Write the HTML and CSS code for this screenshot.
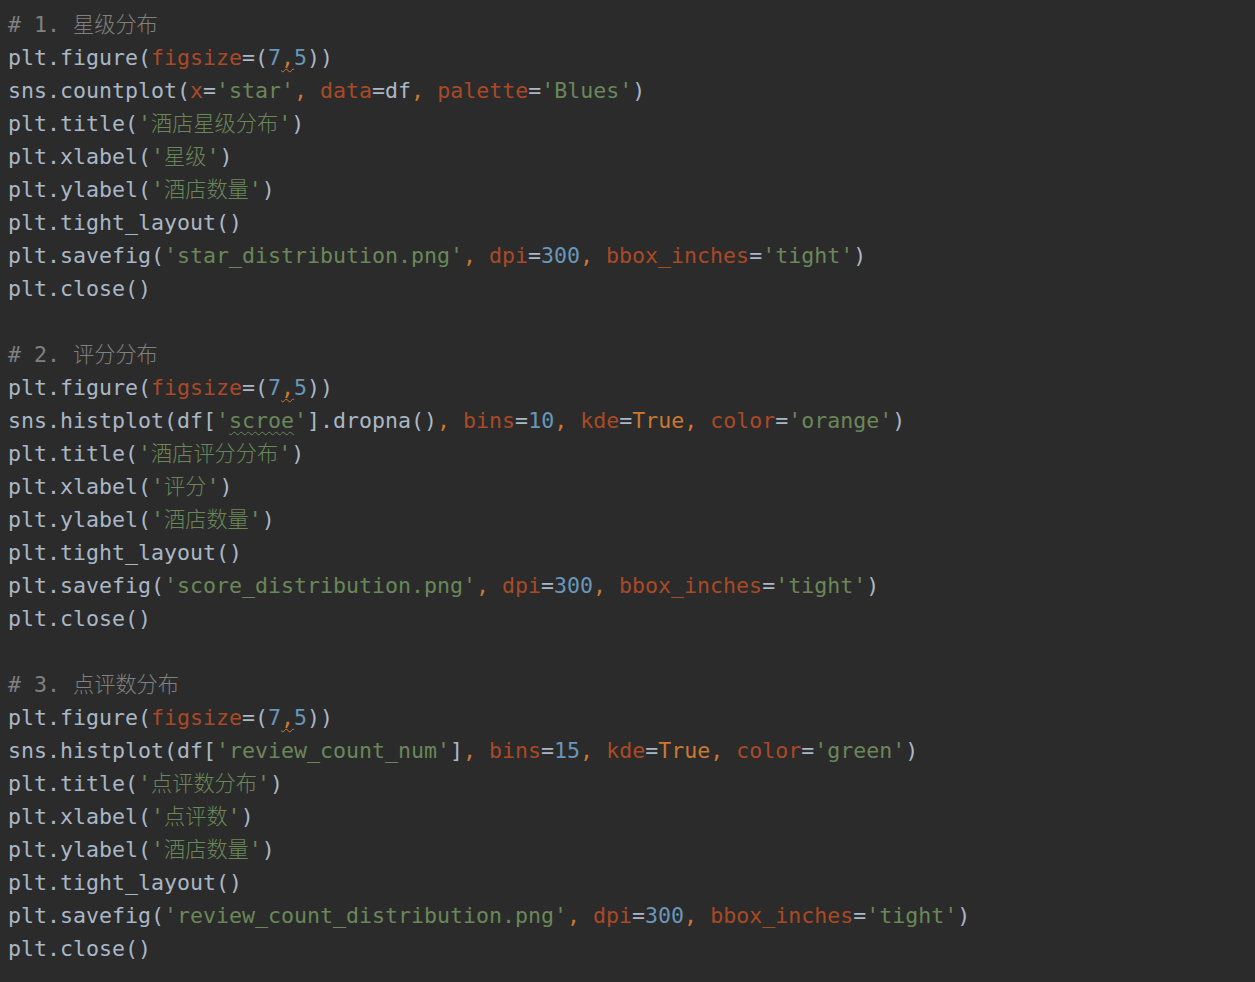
FILE: index.html
```html
<!DOCTYPE html>
<html lang="zh">
<head>
<meta charset="utf-8">
<title>code</title>
<link rel="stylesheet" href="styles.css">
</head>
<body>
<div class="editor">
<div class="line"><span class="com"># 1. <span class="cjk">星级分布</span></span></div>
<div class="line">plt.figure(<span class="param">figsize</span>=(<span class="num">7</span><span class="kw warn">,</span><span class="num">5</span>))</div>
<div class="line">sns.countplot(<span class="param">x</span>=<span class="str">'star'</span><span class="kw">, </span><span class="param">data</span>=df<span class="kw">, </span><span class="param">palette</span>=<span class="str">'Blues'</span>)</div>
<div class="line">plt.title(<span class="str">'<span class="cjk">酒店星级分布</span>'</span>)</div>
<div class="line">plt.xlabel(<span class="str">'<span class="cjk">星级</span>'</span>)</div>
<div class="line">plt.ylabel(<span class="str">'<span class="cjk">酒店数量</span>'</span>)</div>
<div class="line">plt.tight_layout()</div>
<div class="line">plt.savefig(<span class="str">'star_distribution.png'</span><span class="kw">, </span><span class="param">dpi</span>=<span class="num">300</span><span class="kw">, </span><span class="param">bbox_inches</span>=<span class="str">'tight'</span>)</div>
<div class="line">plt.close()</div>
<div class="line"></div>
<div class="line"><span class="com"># 2. <span class="cjk">评分分布</span></span></div>
<div class="line">plt.figure(<span class="param">figsize</span>=(<span class="num">7</span><span class="kw warn">,</span><span class="num">5</span>))</div>
<div class="line">sns.histplot(df[<span class="str">'<span class="typo">scroe</span>'</span>].dropna()<span class="kw">, </span><span class="param">bins</span>=<span class="num">10</span><span class="kw">, </span><span class="param">kde</span>=<span class="kw">True, </span><span class="param">color</span>=<span class="str">'orange'</span>)</div>
<div class="line">plt.title(<span class="str">'<span class="cjk">酒店评分分布</span>'</span>)</div>
<div class="line">plt.xlabel(<span class="str">'<span class="cjk">评分</span>'</span>)</div>
<div class="line">plt.ylabel(<span class="str">'<span class="cjk">酒店数量</span>'</span>)</div>
<div class="line">plt.tight_layout()</div>
<div class="line">plt.savefig(<span class="str">'score_distribution.png'</span><span class="kw">, </span><span class="param">dpi</span>=<span class="num">300</span><span class="kw">, </span><span class="param">bbox_inches</span>=<span class="str">'tight'</span>)</div>
<div class="line">plt.close()</div>
<div class="line"></div>
<div class="line"><span class="com"># 3. <span class="cjk">点评数分布</span></span></div>
<div class="line">plt.figure(<span class="param">figsize</span>=(<span class="num">7</span><span class="kw warn">,</span><span class="num">5</span>))</div>
<div class="line">sns.histplot(df[<span class="str">'review_count_num'</span>]<span class="kw">, </span><span class="param">bins</span>=<span class="num">15</span><span class="kw">, </span><span class="param">kde</span>=<span class="kw">True, </span><span class="param">color</span>=<span class="str">'green'</span>)</div>
<div class="line">plt.title(<span class="str">'<span class="cjk">点评数分布</span>'</span>)</div>
<div class="line">plt.xlabel(<span class="str">'<span class="cjk">点评数</span>'</span>)</div>
<div class="line">plt.ylabel(<span class="str">'<span class="cjk">酒店数量</span>'</span>)</div>
<div class="line">plt.tight_layout()</div>
<div class="line">plt.savefig(<span class="str">'review_count_distribution.png'</span><span class="kw">, </span><span class="param">dpi</span>=<span class="num">300</span><span class="kw">, </span><span class="param">bbox_inches</span>=<span class="str">'tight'</span>)</div>
<div class="line">plt.close()</div>
</div>
</body>
</html>
```

FILE: styles.css
```css
html, body {
  margin: 0;
  padding: 0;
  background: #2b2b2b;
  height: 100%;
}

.editor {
  padding: 8px 0 0 8px;
  font-family: "DejaVu Sans Mono", "Liberation Mono", monospace;
  font-size: 21.6px;
  color: #a9b7c6;
}

.line {
  height: 33px;
  line-height: 33px;
  white-space: pre;
}

.com { color: #808080; }
.kw { color: #cc7832; }
.str { color: #6a8759; }
.num { color: #6897bb; }
.param { color: #aa4926; }

.cjk {
  font-family: "Noto Sans CJK SC", sans-serif;
  font-size: 21.2px;
  font-weight: 300;
  line-height: 1;
}

.warn {
  text-decoration: underline wavy #cc7832;
  text-decoration-thickness: 1px;
  text-underline-offset: 3px;
}

.typo {
  text-decoration: underline wavy #6a8759;
  text-decoration-thickness: 1px;
  text-underline-offset: 3px;
}
```
